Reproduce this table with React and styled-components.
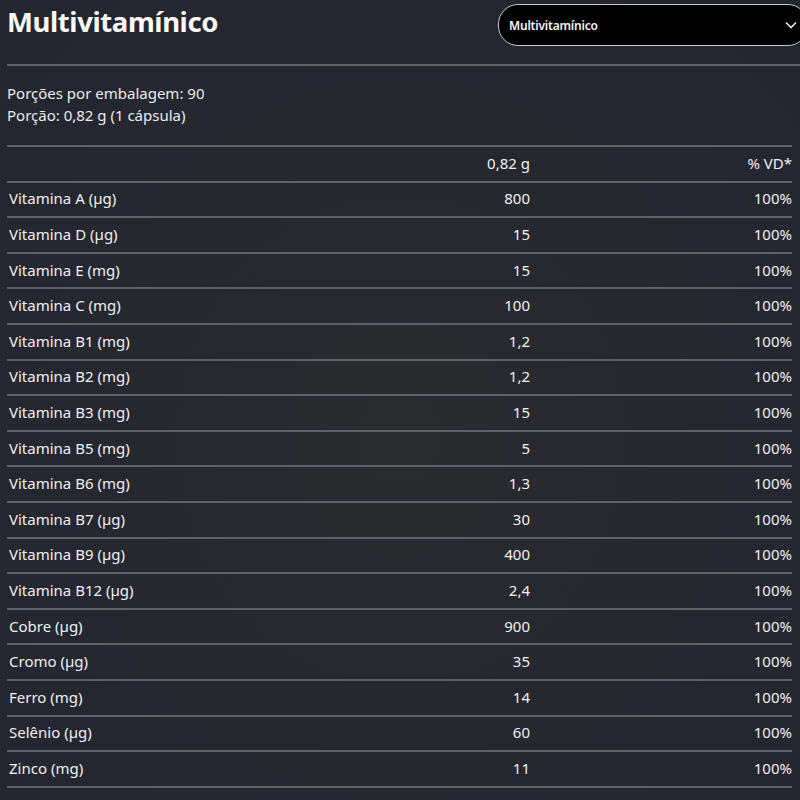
import styled, { createGlobalStyle } from "styled-components";

const GlobalStyle = createGlobalStyle`
  html, body {
    margin: 0;
    padding: 0;
    background: #252830;
    overflow: hidden;
  }
  body {
    font-family: "Noto Sans", "Liberation Sans", sans-serif;
    color: #f2f2f2;
  }
`;

const Page = styled.div`
  width: 800px;
  height: 800px;
  overflow: hidden;
  background: radial-gradient(ellipse at 50% 55%, #2a2b2d 0%, #262830 45%, #23262f 100%);
  padding-left: 7px;
  box-sizing: border-box;
`;

const Header = styled.div`
  display: flex;
  justify-content: space-between;
  align-items: flex-start;
  height: 64px;
  border-bottom: 2px solid #5e6168;
`;

const Title = styled.h1`
  margin: 3px 0 0;
  font-size: 27.5px;
  font-weight: 700;
  letter-spacing: -0.4px;
  color: #fafafa;
`;

const Select = styled.div`
  display: flex;
  flex-shrink: 0;
  align-items: center;
  justify-content: space-between;
  box-sizing: border-box;
  width: 310px;
  height: 42px;
  margin-top: 4px;
  margin-right: -8px;
  padding: 0 10px 0 10px;
  background: #000;
  border: 1.5px solid #c9c9c9;
  border-radius: 20px;
  font-size: 12px;
  font-weight: 600;
  letter-spacing: -0.2px;
  color: #f5f5f5;

  svg {
    flex-shrink: 0;
  }
`;

const Serving = styled.div`
  padding-top: 16px;
  font-size: 15px;
  line-height: 22px;
  color: #ececec;
`;

const Table = styled.div`
  margin-top: 19px;
  width: 785px;
  border-top: 2px solid #5e6168;
`;

const Row = styled.div`
  display: grid;
  grid-template-columns: 1fr 220px 262px;
  align-items: center;
  height: 33.6px;
  border-bottom: 2px solid #5e6168;
  font-size: 15px;
  color: #f0f0f0;
`;

const Cell = styled.div`
  padding-left: ${(p) => (p.$right ? 0 : "2px")};
  text-align: ${(p) => (p.$right ? "right" : "left")};
  padding-bottom: 2px;
`;

const rows = [
  ["Vitamina A (µg)", "800"],
  ["Vitamina D (µg)", "15"],
  ["Vitamina E (mg)", "15"],
  ["Vitamina C (mg)", "100"],
  ["Vitamina B1 (mg)", "1,2"],
  ["Vitamina B2 (mg)", "1,2"],
  ["Vitamina B3 (mg)", "15"],
  ["Vitamina B5 (mg)", "5"],
  ["Vitamina B6 (mg)", "1,3"],
  ["Vitamina B7 (µg)", "30"],
  ["Vitamina B9 (µg)", "400"],
  ["Vitamina B12 (µg)", "2,4"],
  ["Cobre (µg)", "900"],
  ["Cromo (µg)", "35"],
  ["Ferro (mg)", "14"],
  ["Selênio (µg)", "60"],
  ["Zinco (mg)", "11"],
];

export default function App() {
  return (
    <Page>
      <GlobalStyle />
      <Header>
        <Title>Multivitamínico</Title>
        <Select>
          <span>Multivitamínico</span>
          <svg width="12" height="12" viewBox="0 0 12 12" fill="none">
            <path d="M1 3.5l5 5 5-5" stroke="#e6e6e6" strokeWidth="1.6" />
          </svg>
        </Select>
      </Header>
      <Serving>
        Porções por embalagem: 90
        <br />
        Porção: 0,82 g (1 cápsula)
      </Serving>
      <Table>
        <Row>
          <Cell />
          <Cell $right>0,82 g</Cell>
          <Cell $right>% VD*</Cell>
        </Row>
        {rows.map(([name, amount]) => (
          <Row key={name}>
            <Cell>{name}</Cell>
            <Cell $right>{amount}</Cell>
            <Cell $right>100%</Cell>
          </Row>
        ))}
      </Table>
    </Page>
  );
}
